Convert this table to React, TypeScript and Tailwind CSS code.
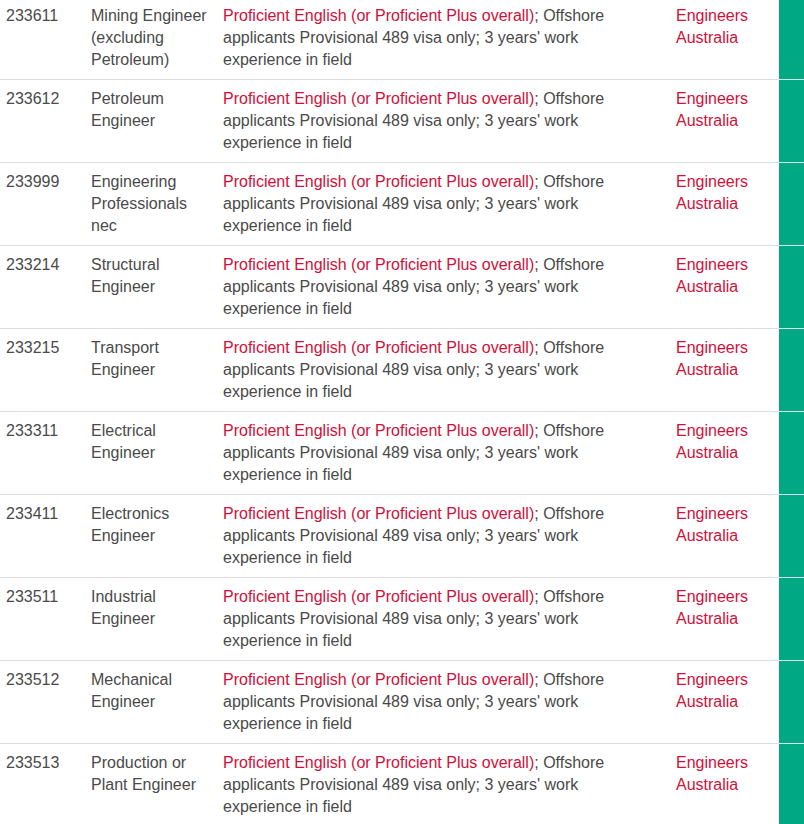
type Row = {
  code: string;
  occupation: string;
};

const rows: Row[] = [
  { code: '233611', occupation: 'Mining Engineer (excluding Petroleum)' },
  { code: '233612', occupation: 'Petroleum Engineer' },
  { code: '233999', occupation: 'Engineering Professionals nec' },
  { code: '233214', occupation: 'Structural Engineer' },
  { code: '233215', occupation: 'Transport Engineer' },
  { code: '233311', occupation: 'Electrical Engineer' },
  { code: '233411', occupation: 'Electronics Engineer' },
  { code: '233511', occupation: 'Industrial Engineer' },
  { code: '233512', occupation: 'Mechanical Engineer' },
  { code: '233513', occupation: 'Production or Plant Engineer' },
];

export default function App() {
  return (
    <div className="w-[804px] h-[824px] overflow-hidden bg-white font-['Liberation_Sans',Arial,sans-serif] text-[16px] leading-[22px] text-[#4a4a4a]">
      {/* table is scrolled a few pixels, first row is cut at the top */}
      <table className="table-fixed w-[804px] border-collapse -mt-[3px]">
        <colgroup>
          <col className="w-[85px]" />
          <col className="w-[132px]" />
          <col className="w-[453px]" />
          <col className="w-[109px]" />
          <col className="w-[25px]" />
        </colgroup>
        <tbody>
          {rows.map((row, i) => (
            <tr key={row.code}>
              <td className={`align-top pl-[6px] pr-[6px] pt-[8px] pb-[8px] ${i > 0 ? 'border-t border-[#dddddd]' : ''}`}>
                {row.code}
              </td>
              <td className={`align-top pl-[6px] pr-[8px] pt-[8px] pb-[8px] ${i > 0 ? 'border-t border-[#dddddd]' : ''}`}>
                {row.occupation}
              </td>
              <td className={`align-top pl-[6px] pr-[40px] pt-[8px] pb-[8px] ${i > 0 ? 'border-t border-[#dddddd]' : ''}`}>
                <span className="text-[#d0103a]">Proficient English (or Proficient Plus overall)</span>
                ; Offshore applicants Provisional 489 visa only; 3 years' work experience in field
              </td>
              <td className={`align-top pl-[6px] pr-[6px] pt-[8px] pb-[8px] text-[#d0103a] ${i > 0 ? 'border-t border-[#dddddd]' : ''}`}>
                Engineers Australia
              </td>
              <td className={`bg-[#00a884] ${i > 0 ? 'border-t border-[#d6f0e9]' : ''}`}></td>
            </tr>
          ))}
        </tbody>
      </table>
    </div>
  );
}
